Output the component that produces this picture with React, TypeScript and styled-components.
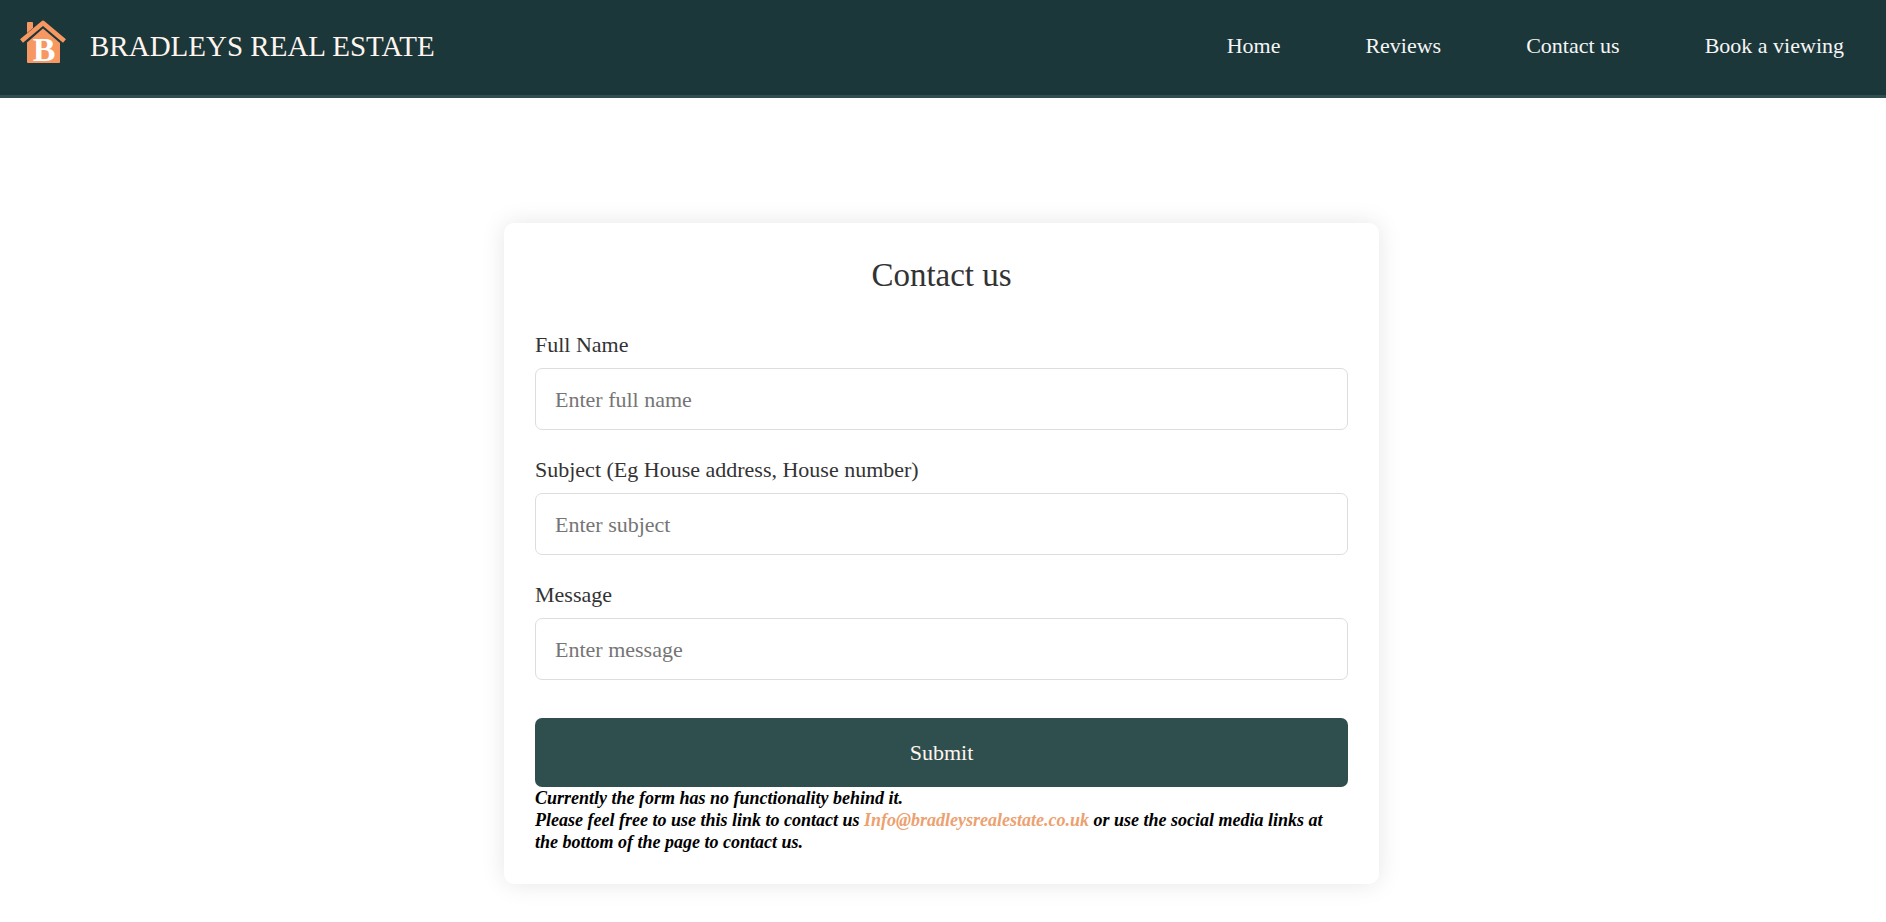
import React from "react";
import styled, { createGlobalStyle } from "styled-components";

const GlobalStyle = createGlobalStyle`
  *, *::before, *::after { box-sizing: border-box; }
  body {
    margin: 0;
    background: #fff;
    color: #000;
    font-family: "Liberation Serif", serif;
  }
`;

const Header = styled.header`
  display: flex;
  align-items: center;
  justify-content: space-between;
  min-height: 98px;
  padding: 0 42px 4px 18px;
  background: #1c373a;
  border-bottom: 3px solid #2f4f4f;
`;

const Brand = styled.a`
  display: flex;
  align-items: center;
  gap: 20px;
  color: #fff5ee;
  font-size: 29px;
  line-height: 36px;
  text-decoration: none;
`;

const Logo = styled.svg`
  display: block;
  width: 52px;
  height: 52px;
`;

const Nav = styled.nav`
  display: flex;
  gap: 85px;
`;

const NavLink = styled.a`
  color: #f5f5f5;
  font-size: 22px;
  line-height: 28px;
  text-decoration: none;
`;

const Main = styled.main`
  display: flex;
  justify-content: center;
  padding: 125px 18px 39px 15px;
`;

const Card = styled.section`
  width: 100%;
  max-width: 875px;
  padding: 31px;
  background: #fff;
  border-radius: 10px;
  box-shadow: 0 0 25px rgba(0, 0, 0, 0.1);
`;

const Title = styled.h1`
  margin: 0 0 34px;
  color: #333;
  font-size: 33px;
  font-weight: 400;
  line-height: 42px;
  text-align: center;
`;

const Form = styled.form`
  display: flex;
  flex-direction: column;
  gap: 25px;
`;

const Field = styled.div`
  display: flex;
  flex-direction: column;
  gap: 8px;
`;

const Label = styled.label`
  color: #333;
  font-size: 22px;
  line-height: 30px;
`;

const Input = styled.input`
  width: 100%;
  height: 62px;
  padding: 2px 19px 0;
  border: 1px solid #ddd;
  border-radius: 7px;
  background: #fff;
  color: #333;
  font-family: inherit;
  font-size: 22px;

  &::placeholder {
    color: #757575;
    opacity: 1;
  }
`;

const Submit = styled.button`
  height: 69px;
  margin-top: 13px;
  border: 0;
  border-radius: 7px;
  background: #2f4f4f;
  color: #fff5ee;
  font-family: inherit;
  font-size: 22px;
  cursor: pointer;
`;

const Note = styled.p`
  margin: 0;
  font-size: 18px;
  font-style: italic;
  font-weight: 700;
  line-height: 22px;
`;

const MailLink = styled.a`
  color: #eca170;
  text-decoration: none;
`;

const links = [
  { label: "Home", href: "#home" },
  { label: "Reviews", href: "#reviews" },
  { label: "Contact us", href: "#contact" },
  { label: "Book a viewing", href: "#viewing" },
];

const fields = [
  { id: "name", label: "Full Name", placeholder: "Enter full name" },
  {
    id: "subject",
    label: "Subject (Eg House address, House number)",
    placeholder: "Enter subject",
  },
  { id: "message", label: "Message", placeholder: "Enter message" },
];

function HouseLogo() {
  return (
    <Logo viewBox="0 0 52 52" aria-hidden="true">
      <path d="M9 3q0 -1 1 -1h4q1 0 1 1v5l-6 5z" fill="#f79862" />
      <path
        d="M3.500 21 25 3 46.500 21"
        fill="none"
        stroke="#f79862"
        strokeWidth="4.6"
        strokeLinejoin="round"
      />
      <path
        d="M25 8.500 L42 23 V42 q0 1 -1 1 H10 q-1 0 -1 -1 V22.500 Z"
        fill="#f79862"
      />
      <text
        x="26"
        y="41"
        fill="#fff"
        fontFamily="Liberation Serif, serif"
        fontSize="34"
        fontWeight="700"
        textAnchor="middle"
      >
        B
      </text>
    </Logo>
  );
}

export default function App() {
  return (
    <>
      <GlobalStyle />
      <Header>
        <Brand href="#home">
          <HouseLogo />
          BRADLEYS REAL ESTATE
        </Brand>
        <Nav aria-label="Main">
          {links.map((link) => (
            <NavLink key={link.href} href={link.href}>
              {link.label}
            </NavLink>
          ))}
        </Nav>
      </Header>
      <Main>
        <Card>
          <Title>Contact us</Title>
          <Form onSubmit={(event) => event.preventDefault()}>
            {fields.map((field) => (
              <Field key={field.id}>
                <Label htmlFor={field.id}>{field.label}</Label>
                <Input
                  id={field.id}
                  name={field.id}
                  type="text"
                  placeholder={field.placeholder}
                />
              </Field>
            ))}
            <Submit type="submit">Submit</Submit>
          </Form>
          <Note>
            Currently the form has no functionality behind it.
            <br />
            Please feel free to use this link to contact us{" "}
            <MailLink href="mailto:Info@bradleysrealestate.co.uk">
              Info@bradleysrealestate.co.uk
            </MailLink>{" "}
            or use the social media links at the bottom of the page to contact us.
          </Note>
        </Card>
      </Main>
    </>
  );
}
